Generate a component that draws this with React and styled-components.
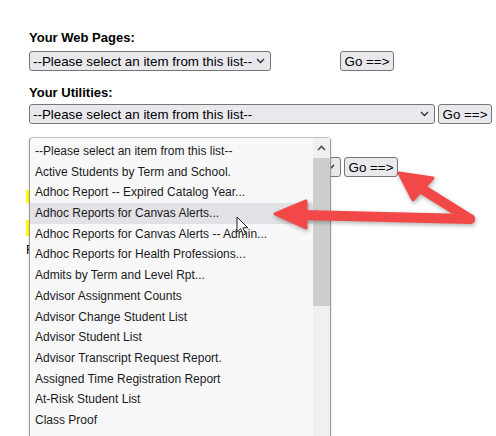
import React from "react";
import styled, { createGlobalStyle } from "styled-components";

const GlobalStyle = createGlobalStyle`
  html, body {
    margin: 0;
    padding: 0;
    background: #fff;
    overflow: hidden;
  }
  body {
    font-family: "Liberation Sans", Arial, sans-serif;
    color: #000;
  }
`;

const Page = styled.div`
  position: relative;
  width: 496px;
  height: 436px;
  overflow: hidden;
  padding: 30px 0 0 29px;
  box-sizing: border-box;
`;

const Field = styled.div`
  margin-top: ${(p) => p.$top || 0}px;
`;

const Label = styled.div`
  font-size: 13px;
  font-weight: bold;
  line-height: 15px;
  margin-bottom: ${(p) => p.$gap}px;
`;

const Row = styled.div`
  display: flex;
  align-items: center;
  gap: ${(p) => p.$gap}px;
`;

const SelectBox = styled.div`
  box-sizing: border-box;
  width: ${(p) => p.$width}px;
  height: 20px;
  display: flex;
  align-items: center;
  justify-content: space-between;
  padding: 0 5px 0 3px;
  border: 1px solid #767676;
  border-radius: 3px;
  background: #e9e9ed;
  font-size: 13.33px;
  white-space: nowrap;
`;

const GoButton = styled.button`
  box-sizing: border-box;
  height: 20px;
  width: 54px;
  padding: 0;
  border: 1px solid #767676;
  border-radius: 3px;
  background: #e9e9ed;
  font-family: "Liberation Sans", Arial, sans-serif;
  font-size: 13.33px;
  color: #000;
`;

const Notes = styled.div`
  margin-left: -3px;
`;

const Note = styled.div`
  width: fit-content;
  margin-top: ${(p) => p.$top}px;
  padding-left: ${(p) => (p.$highlight ? 6 : 0)}px;
  font-size: ${(p) => p.$size}px;
  line-height: ${(p) => p.$line}px;
  background: ${(p) => (p.$highlight ? "#ffff00" : "transparent")};
`;

const Listbox = styled.div`
  position: absolute;
  left: 29px;
  top: 137px;
  width: 302px;
  height: 320px;
  box-sizing: border-box;
  display: flex;
  background: #f8f8fa;
  border: 1px solid #9a9a9a;
  border-top-color: #c4c4c4;
  border-radius: 4px 4px 0 0;
  box-shadow: 0 1px 3px rgba(0, 0, 0, 0.15);
`;

const Options = styled.div`
  flex: 1;
  padding-top: 3px;
`;

const Option = styled.div`
  height: 20.7px;
  line-height: 20.7px;
  padding-left: 5px;
  font-size: 12px;
  color: #1b1b1b;
  white-space: nowrap;
  background: ${(p) => (p.$active ? "#e1e1e6" : "transparent")};
`;

const Scrollbar = styled.div`
  width: 17px;
  display: flex;
  flex-direction: column;
  background: #f0f0f0;
`;

const ScrollButton = styled.div`
  height: 20px;
  display: flex;
  align-items: center;
  justify-content: center;
`;

const Thumb = styled.div`
  height: 148px;
  background: #cdcdcd;
`;

const Overlay = styled.svg`
  position: absolute;
  left: 0;
  top: 0;
  pointer-events: none;
`;

const Cursor = styled.svg`
  position: absolute;
  left: 236px;
  top: 216px;
  pointer-events: none;
`;

const PLACEHOLDER = "--Please select an item from this list--";

const reports = [
  PLACEHOLDER,
  "Active Students by Term and School.",
  "Adhoc Report -- Expired Catalog Year...",
  "Adhoc Reports for Canvas Alerts...",
  "Adhoc Reports for Canvas Alerts -- Admin...",
  "Adhoc Reports for Health Professions...",
  "Admits by Term and Level Rpt...",
  "Advisor Assignment Counts",
  "Advisor Change Student List",
  "Advisor Student List",
  "Advisor Transcript Request Report.",
  "Assigned Time Registration Report",
  "At-Risk Student List",
  "Class Proof",
];

function Chevron() {
  return (
    <svg width="9" height="6" viewBox="0 0 9 6">
      <path d="M1 1 L4.5 4.5 L8 1" fill="none" stroke="#333" strokeWidth="1.4" />
    </svg>
  );
}

function Select({ width }) {
  return (
    <SelectBox $width={width}>
      <span>{PLACEHOLDER}</span>
      <Chevron />
    </SelectBox>
  );
}

function App() {
  return (
    <>
      <GlobalStyle />
      <Page>
        <Field>
          <Label $gap={6}>Your Web Pages:</Label>
          <Row $gap={69}>
            <Select width={242} />
            <GoButton>Go ==&gt;</GoButton>
          </Row>
        </Field>
        <Field $top={14}>
          <Label $gap={4}>Your Utilities:</Label>
          <Row $gap={3}>
            <Select width={406} />
            <GoButton>Go ==&gt;</GoButton>
          </Row>
        </Field>
        <Field $top={12}>
          <Label $gap={6}>Your Reports:</Label>
          <Row $gap={3}>
            <Select width={312} />
            <GoButton>Go ==&gt;</GoButton>
          </Row>
        </Field>
        <Notes>
          <Note $top={13} $size={11} $line={13} $highlight>
            Reports are listed alphabetically.
          </Note>
          <Note $top={17} $size={13} $line={16} $highlight>
            New reports are added each term.
          </Note>
          <Note $top={6} $size={13} $line={15}>
            Reports run against the current term.
          </Note>
        </Notes>

        <Listbox>
          <Options>
            {reports.map((r, i) => (
              <Option key={r} $active={i === 3}>
                {r}
              </Option>
            ))}
          </Options>
          <Scrollbar>
            <ScrollButton>
              <svg width="9" height="6" viewBox="0 0 9 6">
                <path d="M1 5 L4.5 1.5 L8 5" fill="none" stroke="#505050" strokeWidth="1.6" />
              </svg>
            </ScrollButton>
            <Thumb />
          </Scrollbar>
        </Listbox>

        <Cursor width="14" height="21" viewBox="0 0 14 21">
          <path
            d="M1 1 L1 16 L4.6 12.6 L7.4 19 L9.6 18 L6.9 11.8 L11.8 11.8 Z"
            fill="#fff"
            stroke="#222"
            strokeWidth="1"
            strokeLinejoin="round"
          />
        </Cursor>

        <Overlay width="496" height="436" viewBox="0 0 496 436">
          <g
            fill="#f24848"
            stroke="#f24848"
            strokeLinejoin="round"
            strokeLinecap="round"
            style={{ filter: "drop-shadow(1px 2px 2px rgba(0,0,0,0.3))" }}
          >
            <path d="M302 215 L470 219" strokeWidth="10" fill="none" />
            <path d="M470 219 L414 184" strokeWidth="10" fill="none" />
            <path d="M275 214 L306 201 L306 228 Z" strokeWidth="3" />
            <path d="M399 173 L433 178 L413 200 Z" strokeWidth="3" />
          </g>
        </Overlay>
      </Page>
    </>
  );
}

export default App;
